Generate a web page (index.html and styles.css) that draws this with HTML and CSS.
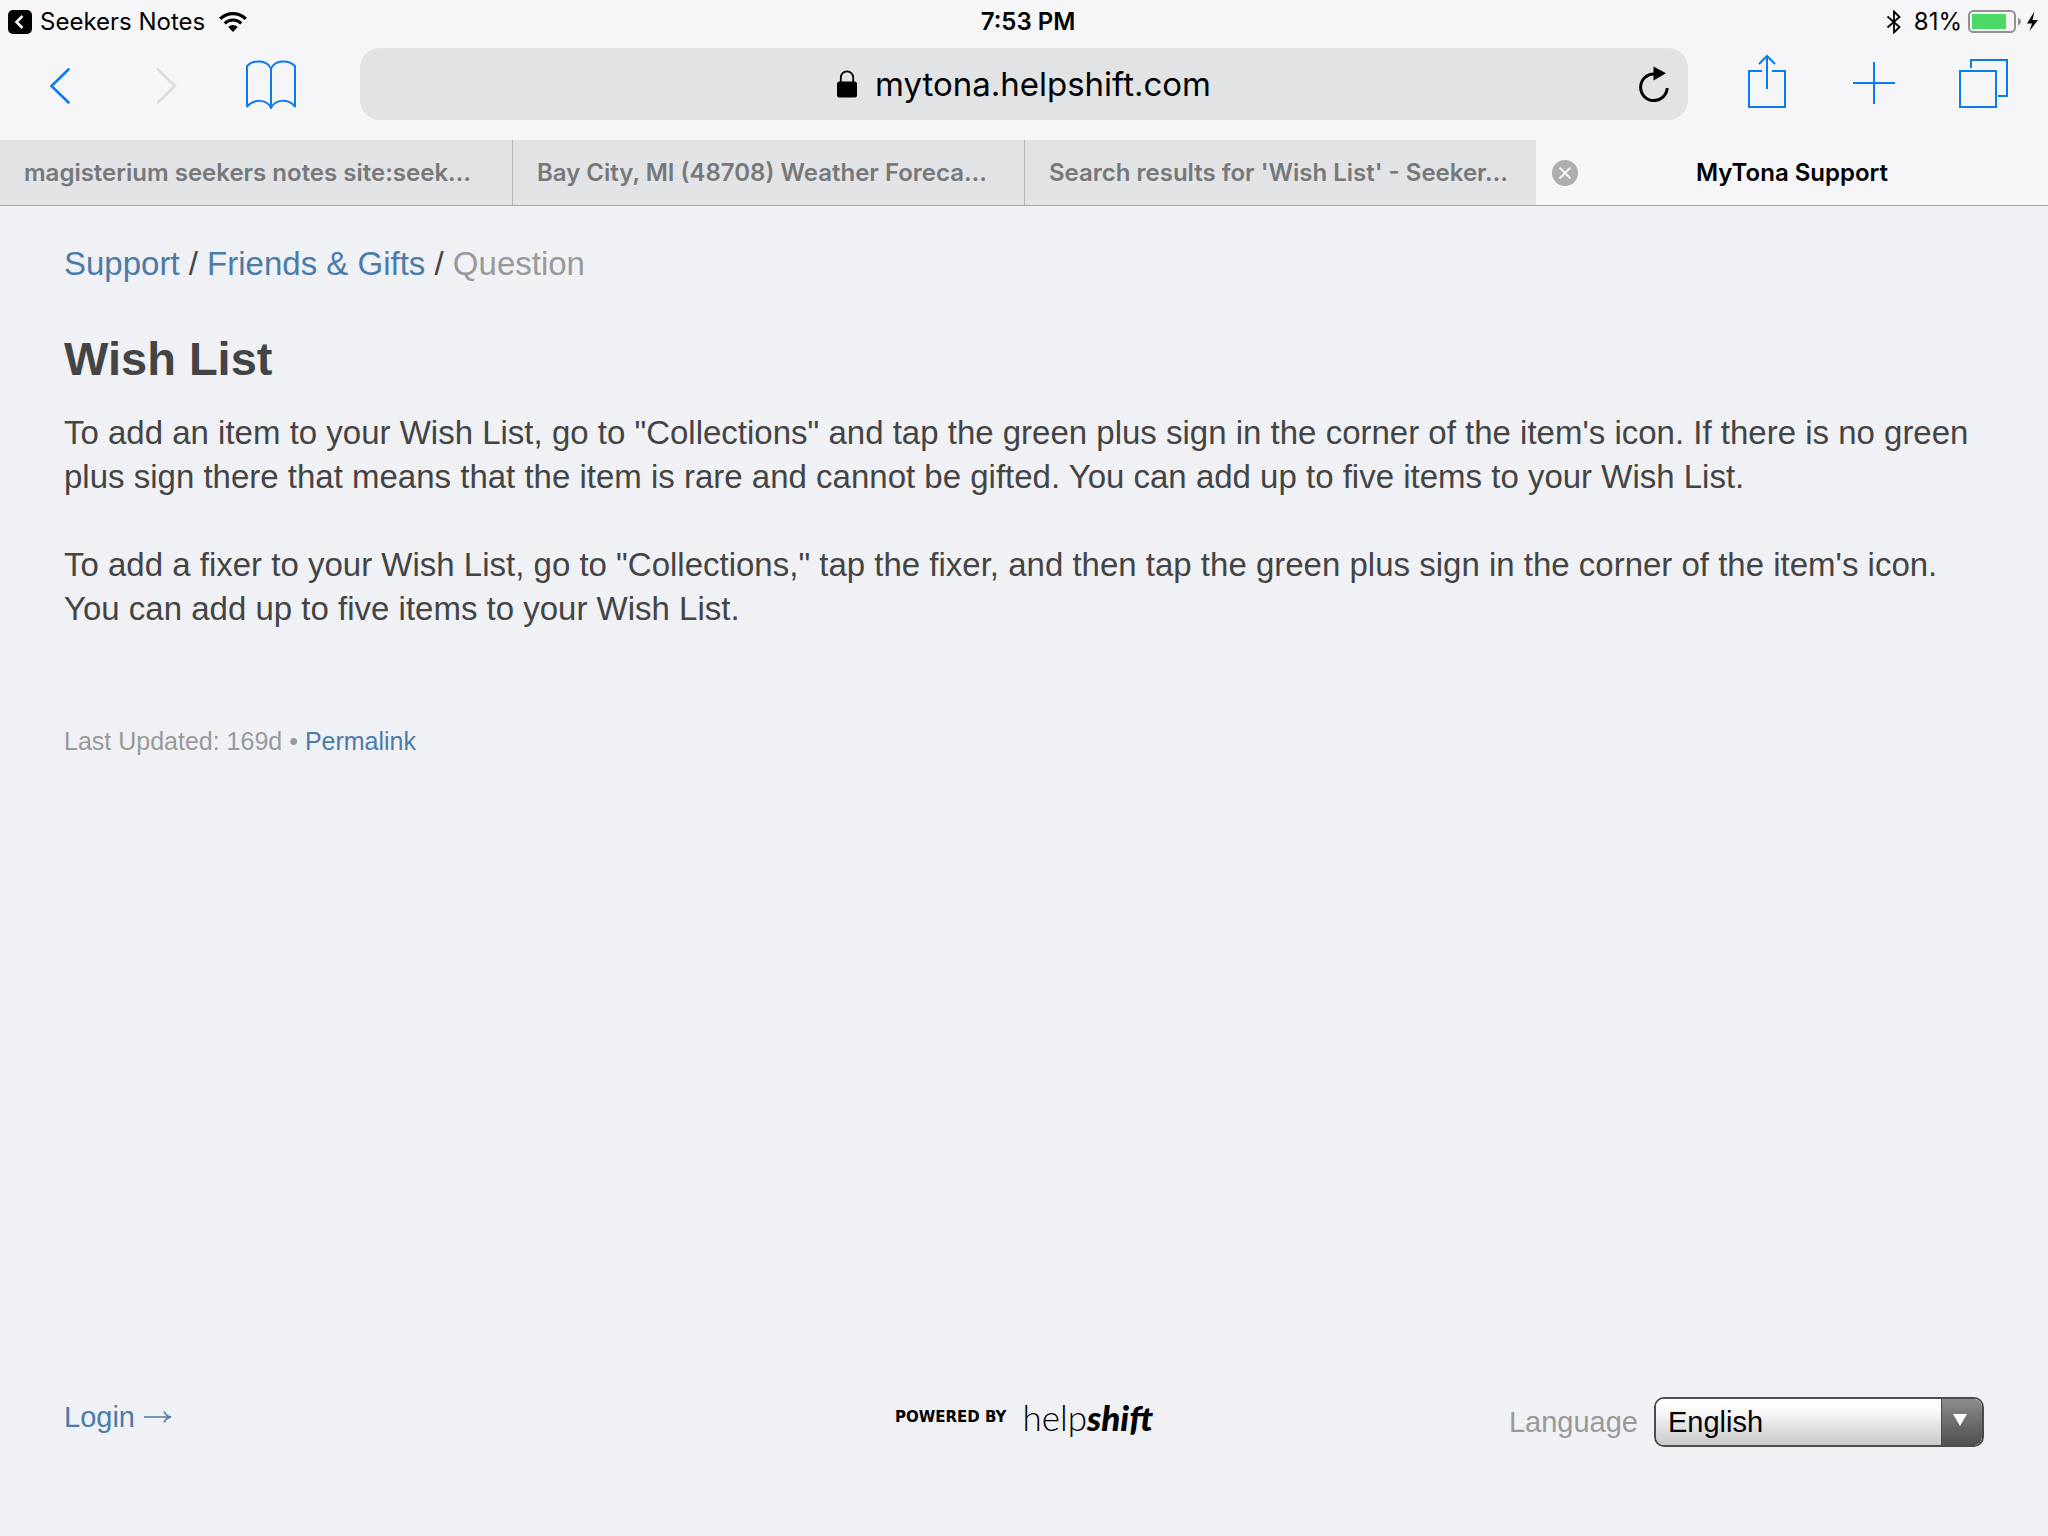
FILE: index.html
```html
<!DOCTYPE html>
<html lang="en">
<head>
<meta charset="utf-8">
<title>MyTona Support</title>
<link rel="stylesheet" href="styles.css">
</head>
<body>
<header class="chrome">
  <div class="status">
    <div class="status-left">
      <svg class="back-app" width="24" height="24" viewBox="0 0 24 24" aria-hidden="true"><rect width="24" height="24" rx="5"/><path d="M14.500 6 8.500 12l6 6" fill="none" stroke="#f6f6f8" stroke-width="2.600"/></svg>
      <span>Seekers Notes</span>
      <svg class="wifi" width="28" height="20" viewBox="0 0 28 20" aria-hidden="true"><g fill="none" stroke="#000" stroke-width="3.200"><path d="M1.200 6.900a18.200 18.200 0 0 1 25.600 0"/><path d="M5.700 11.400a11.800 11.800 0 0 1 16.600 0"/></g><path d="M14 20 9.200 15.100a6.800 6.800 0 0 1 9.600 0z"/></svg>
    </div>
    <time class="clock">7:53 PM</time>
    <div class="status-right">
      <svg width="16" height="24" viewBox="0 0 16 24" aria-hidden="true"><path d="M1.500 6.500 13.500 17 8 22.500V1.500L13.500 7 1.500 17.500" fill="none" stroke="#000" stroke-width="1.800"/></svg>
      <span class="percent">81%</span>
      <svg width="70" height="24" viewBox="0 0 70 24" aria-hidden="true"><rect x="1" y="1" width="46" height="21" rx="4.500" fill="none" stroke="#929295" stroke-width="2"/><path d="M4 4h34v15H4z" fill="#4cd964"/><path d="M50 7.500q3 1.500 3 4t-3 4z" fill="#929295"/><path d="M66.500 1.500 59 13.500h5L61.500 21 70 10h-5.500z"/></svg>
    </div>
  </div>
  <div class="toolbar">
    <nav class="tools tools-left" aria-label="History">
      <button class="tool" type="button" aria-label="Back"><svg width="60" height="72" viewBox="0 0 60 72"><path d="M37.500 21.500 20.500 38l17 16.500" stroke-width="2.600" stroke-linecap="round"/></svg></button>
      <button class="tool tool-off" type="button" aria-label="Forward" disabled><svg width="60" height="72" viewBox="0 0 60 72"><path d="M22 21.500 39 38 22 54.500" stroke-width="2.600" stroke-linecap="round"/></svg></button>
      <button class="tool" type="button" aria-label="Bookmarks"><svg width="60" height="72" viewBox="0 0 60 72"><path d="M30 60V21C26.500 11.500 12.500 11.500 6 18v40.500C12.500 51 25.500 50.500 30 60 34.500 50.500 47.500 51 54 58.500V18C47.500 11.500 33.500 11.500 30 21" stroke-width="2" stroke-linejoin="round"/></svg></button>
    </nav>
    <div class="address">
      <div class="site">
        <label for="url"><svg width="20" height="28" viewBox="0 0 20 28" role="img" aria-label="Secure site"><rect y="11.500" width="20" height="16" rx="2.500"/><path d="M3.800 13V7.500a6.200 6.200 0 0 1 12.400 0V13" fill="none" stroke="#000" stroke-width="1.800"/></svg></label>
        <input class="url" id="url" type="text" value="mytona.helpshift.com">
      </div>
      <button class="reload" type="button" aria-label="Reload"><svg width="32" height="36" viewBox="0 0 32 36"><path d="M29.200 22A13.300 13.300 0 1 1 16 8" fill="none" stroke="#000" stroke-width="3"/><path d="M15.500.500v14L28 7.300z"/></svg></button>
    </div>
    <nav class="tools tools-right" aria-label="Page tools">
      <button class="tool" type="button" aria-label="Share"><svg width="60" height="72" viewBox="0 0 60 72"><path d="M25 23H12v36h36V23H35M30 41V9M22 16l8-8 8 8" stroke-width="2"/></svg></button>
      <button class="tool" type="button" aria-label="New tab"><svg width="60" height="72" viewBox="0 0 60 72"><path d="M8 35h42M29 14v42" stroke-width="2"/></svg></button>
      <button class="tool" type="button" aria-label="Show tabs"><svg width="60" height="72" viewBox="0 0 60 72"><path d="M7 23h36v36H7zM18 20v-8h36v36h-9" stroke-width="2"/></svg></button>
    </nav>
  </div>
  <nav class="tabs" aria-label="Open tabs">
    <a class="tab" href="#">magisterium seekers notes site:seek…</a>
    <a class="tab" href="#">Bay City, MI (48708) Weather Foreca…</a>
    <a class="tab" href="#">Search results for 'Wish List' - Seeker…</a>
    <div class="tab tab-current">
      <button class="close" type="button" aria-label="Close tab"><svg width="26" height="26" viewBox="0 0 26 26"><circle cx="13" cy="13" r="13" fill="#acaeb0"/><path d="m7.500 7.500 11 11m0-11-11 11" stroke="#f6f6f8" stroke-width="2"/></svg></button>
      <span>MyTona Support</span>
    </div>
  </nav>
</header>
<main class="page">
  <nav class="crumbs" aria-label="Breadcrumb"><a href="#">Support</a> / <a href="#">Friends &amp; Gifts</a> / <span class="muted">Question</span></nav>
  <article>
    <h1>Wish List</h1>
    <p>To add an item to your Wish List, go to "Collections" and tap the green plus sign in the corner of the item's icon. If there is no green plus sign there that means that the item is rare and cannot be gifted. You can add up to five items to your Wish List.</p>
    <p>To add a fixer to your Wish List, go to "Collections," tap the fixer, and then tap the green plus sign in the corner of the item's icon. You can add up to five items to your Wish List.</p>
    <div class="meta">Last Updated: 169d • <a href="#">Permalink</a></div>
  </article>
</main>
<footer class="footer">
  <a class="login" href="#">Login <svg width="28" height="16" viewBox="0 0 28 16" aria-hidden="true"><path d="M0 8h26M20 2.500Q22 7 27 8q-5 1-7 5.500" fill="none" stroke="currentColor" stroke-width="1.600"/></svg></a>
  <a class="powered" href="#"><span class="by">POWERED BY</span><span class="brand">help<b>shift</b></span></a>
  <div class="language">
    <label for="lang">Language</label>
    <div class="picker">
      <select id="lang"><option>English</option></select>
      <span class="arrow"><svg width="14" height="12" viewBox="0 0 14 12" aria-hidden="true"><path d="M0 0h14L7 12z" fill="#fff"/></svg></span>
    </div>
  </div>
</footer>
</body>
</html>
```
FILE: styles.css
```css
* { box-sizing: border-box; }

body {
  margin: 0;
  min-height: 100vh;
  display: flex;
  flex-direction: column;
  background: #eff1f5;
  color: #444;
  font-family: "Liberation Sans", Arial, sans-serif;
  font-size: 33px;
  line-height: 44px;
}

a { color: #4b7ba8; text-decoration: none; }
button { padding: 0; border: 0; background: none; font: inherit; }
svg { display: block; flex: none; }

.chrome {
  background: #f6f6f8;
  color: #000;
  font-family: Inter, sans-serif;
  border-bottom: 1px solid #a6a8aa;
}

/* Status bar */
.status {
  display: grid;
  grid-template-columns: 1fr auto 1fr;
  align-items: center;
  height: 48px;
  padding: 0 10px 6px 8px;
  font-size: 24px;
}
.status-left, .status-right { display: flex; align-items: center; }
.status-left { gap: 8px; }
.wifi { margin-left: 6px; }
.clock { padding-left: 10px; font-weight: 600; }
.status-right { justify-content: flex-end; }
.percent { margin: 0 6px 0 12px; }

/* Toolbar */
.toolbar { display: flex; padding-bottom: 20px; }
.tools { display: grid; grid-template-columns: repeat(3, 1fr); width: 360px; flex: none; }
.tools-left { padding: 0 37px 0 8px; }
.tools-right { padding: 0 11px 0 25px; }
.tool { display: flex; justify-content: center; color: #0b7bee; }
.tool-off { color: #dcdcdd; }
.tool svg { fill: none; stroke: currentColor; }
.address {
  flex: 1;
  display: grid;
  grid-template-columns: 32px 1fr 32px;
  align-items: center;
  height: 72px;
  padding: 0 18px;
  border-radius: 20px;
  background: #e1e3e5;
}
.site {
  grid-column: 2;
  display: flex;
  align-items: center;
  justify-content: center;
  gap: 18px;
}
.url {
  field-sizing: content;
  padding: 0;
  border: 0;
  background: none;
  color: #000;
  font: 33px/44px Inter, sans-serif;
}

/* Tab strip */
.tabs { display: grid; grid-template-columns: repeat(4, 1fr); height: 65px; }
.tab {
  display: flex;
  align-items: center;
  min-width: 0;
  padding: 0 24px;
  overflow: hidden;
  white-space: nowrap;
  background: #e1e3e5;
  border-left: 1px solid #b4b6b8;
  color: #76787a;
  font-size: 24px;
  font-weight: 600;
}
.tab:first-child { border-left: 0; }
.tab-current {
  display: grid;
  grid-template-columns: 26px 1fr 26px;
  padding: 0 16px;
  border-left: 0;
  background: #f6f6f8;
  color: #000;
  text-align: center;
}

/* Article */
.page { flex: 1; padding: 36px 64px; }
.muted { color: #999; }
h1 { margin: 45px 0 24px; font-size: 47px; line-height: 56px; }
p { margin: 0 0 44px; }
.meta { margin-top: 88px; color: #999; font-size: 25px; }

/* Footer */
.footer {
  display: grid;
  grid-template-columns: 1fr auto 1fr;
  align-items: start;
  padding: 0 64px 89px;
  font-size: 29px;
}
.login, .powered { display: flex; align-items: center; height: 40px; }
.login { gap: 9px; }
.powered { gap: 16px; color: #000; }
.by { font: bold 15px/20px "DejaVu Sans", sans-serif; }
.brand { font: 300 35px/40px Lato, sans-serif; }
.brand b { font-weight: 900; font-style: italic; }
.language { display: flex; align-items: center; justify-content: flex-end; gap: 16px; color: #999; }
.picker {
  display: grid;
  grid-template-columns: 1fr 41px;
  width: 330px;
  height: 50px;
  border: 2px solid #4c4c4e;
  border-radius: 10px;
  overflow: hidden;
}
.picker select {
  grid-area: 1 / 1 / 2 / 3;
  appearance: none;
  padding: 0 12px;
  border: 0;
  background: linear-gradient(#fff, #fafafa 25%, #c8c8ca);
  color: #000;
  font: inherit;
}
.arrow {
  grid-area: 1 / 2 / 2 / 3;
  display: flex;
  align-items: center;
  justify-content: center;
  padding: 0 4px 4px 0;
  border-left: 1px solid #4c4c4e;
  background: linear-gradient(#8c8c8c, #505050);
  pointer-events: none;
}
```
